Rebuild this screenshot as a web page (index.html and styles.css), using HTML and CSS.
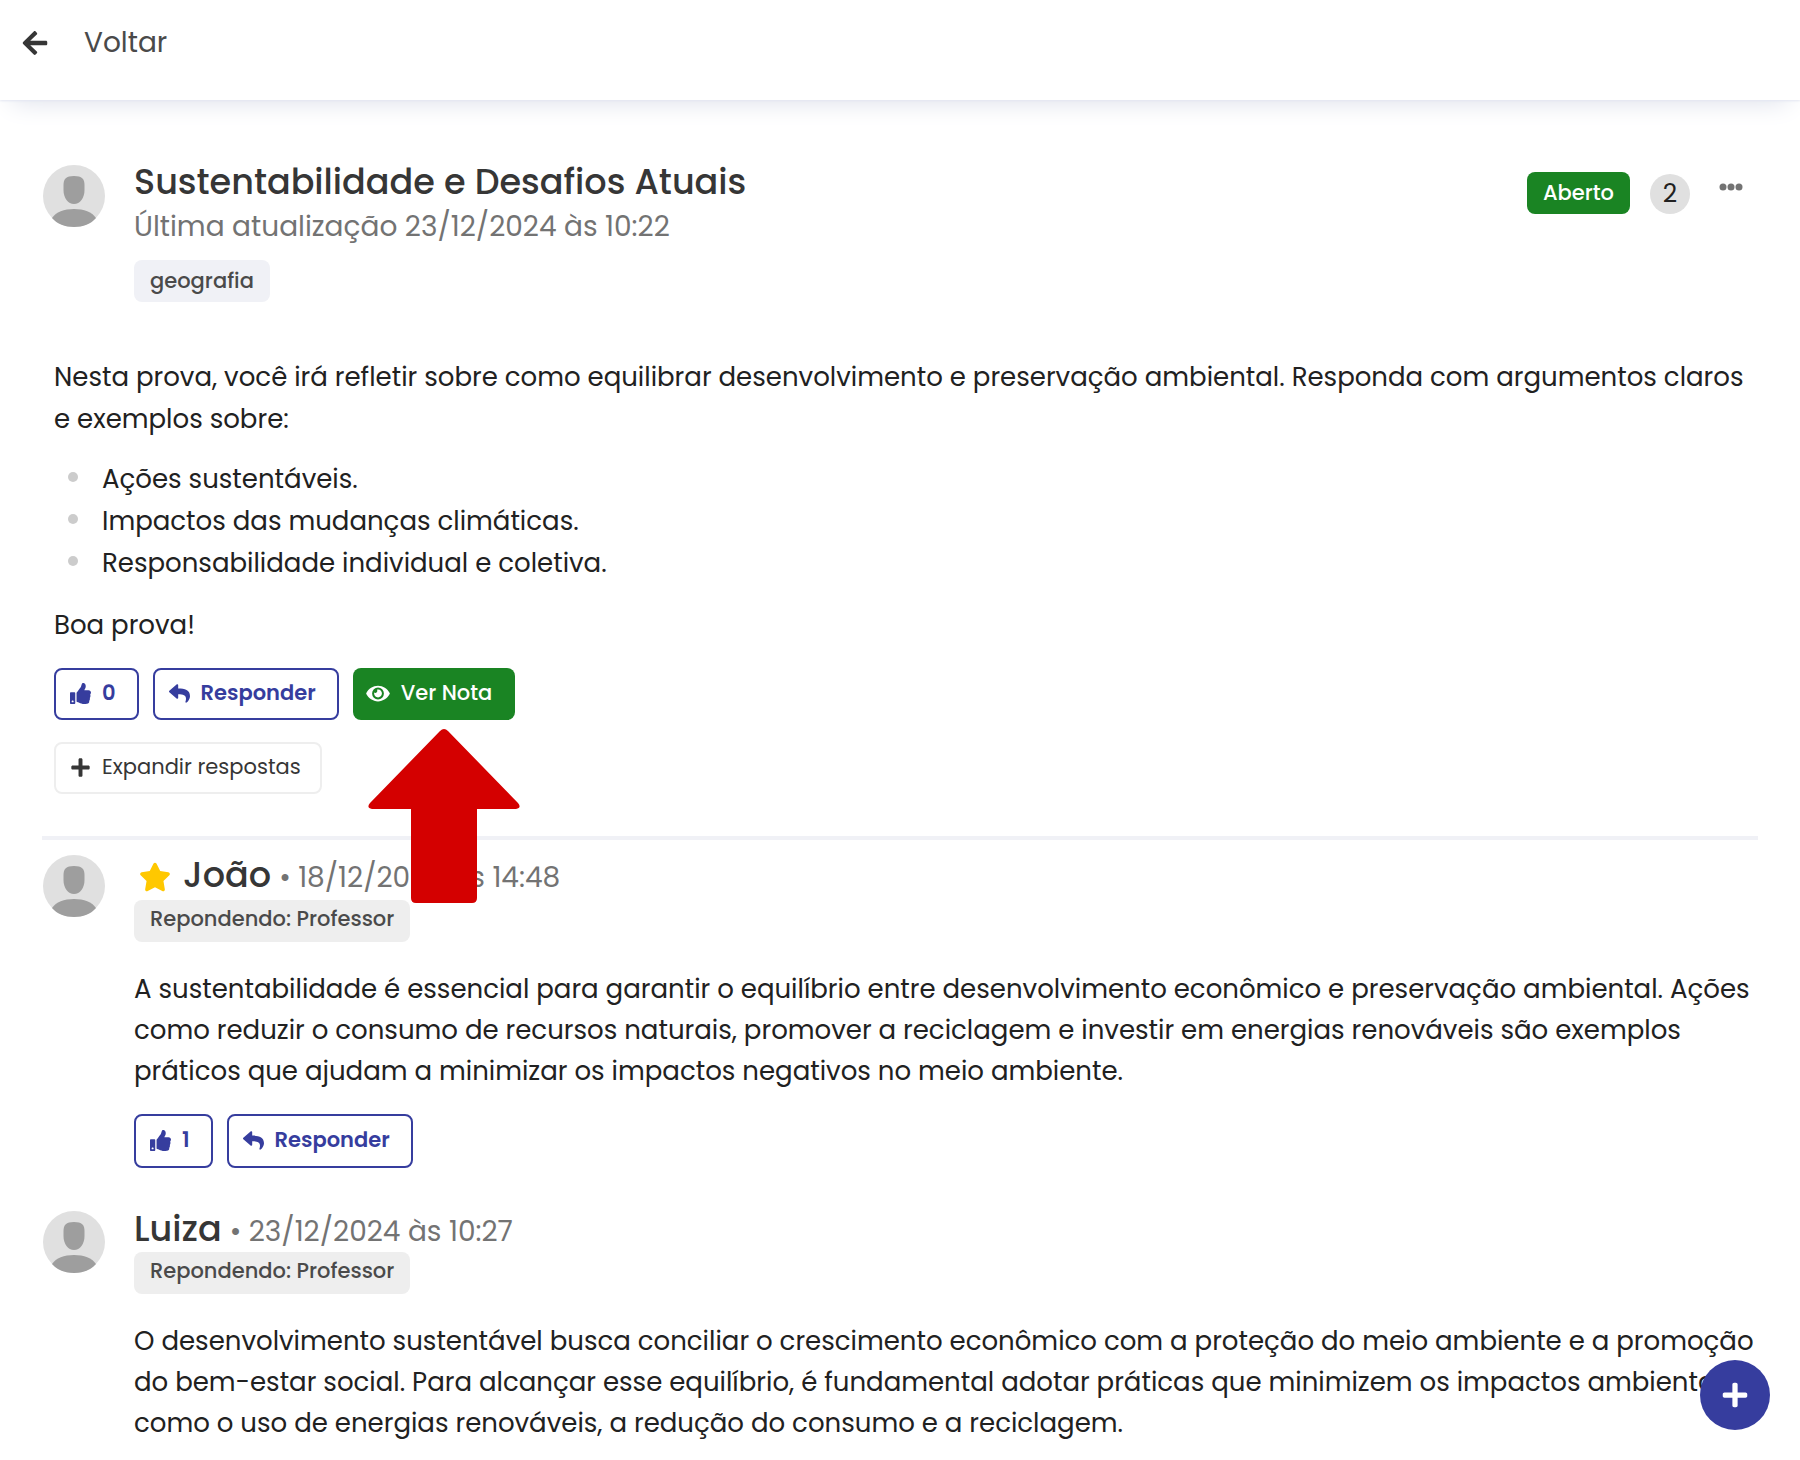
FILE: index.html
```html
<!DOCTYPE html>
<html lang="pt-BR">
<head>
  <meta charset="UTF-8">
  <meta name="viewport" content="width=device-width, initial-scale=1">
  <title>Sustentabilidade e Desafios Atuais</title>
  <link rel="stylesheet" href="styles.css">
</head>
<body>

<!-- Shared icons -->
<svg class="sprite" aria-hidden="true">
  <symbol id="avatar" viewBox="0 0 62 62">
    <circle cx="31" cy="31" r="31" fill="#e0e0e0"/>
    <path d="M31 11c8 0 10.500 3 10.500 9v5c0 8-4.500 14-10.500 14s-10.500-6-10.500-14v-5c0-6 2.500-9 10.500-9z" fill="#9e9e9e"/>
    <path d="M9 53c4-6 12-9 22-9s18 3 22 9c-5 6-13 9-22 9s-17-3-22-9z" fill="#9e9e9e"/>
  </symbol>
  <symbol id="arrow-left" viewBox="0 0 448 512">
    <path d="M257.500 445.100l-22.200 22.200c-9.400 9.400-24.600 9.400-33.900 0L7 273c-9.400-9.400-9.400-24.600 0-33.900L201.400 44.700c9.400-9.400 24.600-9.400 33.900 0l22.200 22.200c9.500 9.500 9.300 25-.4 34.300L136.600 216H424c13.300 0 24 10.700 24 24v32c0 13.300-10.700 24-24 24H136.600l120.500 114.800c9.800 9.300 10 24.800.4 34.300z"/>
  </symbol>
  <symbol id="thumbs-up" viewBox="0 0 512 512">
    <path d="M104 224H24c-13.255 0-24 10.745-24 24v240c0 13.255 10.745 24 24 24h80c13.255 0 24-10.745 24-24V248c0-13.255-10.745-24-24-24zM64 472c-13.255 0-24-10.745-24-24s10.745-24 24-24 24 10.745 24 24-10.745 24-24 24zM384 81.452c0 42.416-25.97 66.208-33.277 94.548h101.723c33.397 0 59.397 27.746 59.553 58.098.084 17.938-7.546 37.249-19.439 49.197l-.11.11c9.836 23.337 8.237 56.037-9.308 79.469 8.681 25.895-.069 57.704-16.382 74.757 4.298 17.598 2.244 32.575-6.148 44.632C440.202 511.587 389.616 512 346.839 512l-2.845-.001c-48.287-.017-87.806-17.598-119.56-31.725-15.957-7.099-36.821-15.887-52.651-16.178-6.54-.12-11.783-5.457-11.783-11.998v-213.77c0-3.2 1.282-6.271 3.558-8.521 39.614-39.144 56.648-80.587 89.117-113.111 14.804-14.832 20.188-37.236 25.393-58.902C282.515 39.293 291.817 0 312 0c24 0 72 8 72 81.452z"/>
  </symbol>
  <symbol id="reply" viewBox="0 0 512 512">
    <path d="M8.309 189.836L184.313 37.851C199.719 24.546 224 35.347 224 56.015v80.053c160.629 1.839 288 34.032 288 186.258 0 61.441-39.581 122.309-83.333 154.132-13.653 9.931-33.111-2.533-28.077-18.631 45.344-145.012-21.507-183.51-176.59-185.742V360c0 20.7-24.3 31.453-39.687 18.164l-176.004-152c-11.071-9.562-11.086-26.753 0-36.328z"/>
  </symbol>
  <symbol id="eye" viewBox="0 0 576 512">
    <path d="M572.52 241.4C518.29 135.59 410.93 64 288 64S57.68 135.64 3.48 241.41a32.35 32.35 0 0 0 0 29.19C57.71 376.41 165.07 448 288 448s230.32-71.64 284.52-177.41a32.35 32.35 0 0 0 0-29.19zM288 400a144 144 0 1 1 144-144 143.93 143.93 0 0 1-144 144zm0-240a95.31 95.31 0 0 0-25.31 3.79 47.85 47.85 0 0 1-66.9 66.9A95.78 95.78 0 1 0 288 160z"/>
  </symbol>
  <symbol id="plus" viewBox="0 0 448 512">
    <path d="M416 208H272V64c0-17.67-14.33-32-32-32h-32c-17.67 0-32 14.33-32 32v144H32c-17.67 0-32 14.33-32 32v32c0 17.67 14.33 32 32 32h144v144c0 17.67 14.33 32 32 32h32c17.67 0 32-14.33 32-32V304h144c17.67 0 32-14.33 32-32v-32c0-17.67-14.33-32-32-32z"/>
  </symbol>
  <symbol id="star" viewBox="0 0 576 512">
    <path d="M259.3 17.8L194 150.2 47.9 171.5c-26.2 3.8-36.7 36.1-17.7 54.6l105.7 103-25 145.5c-4.5 26.3 23.2 46 46.4 33.7L288 439.6l130.7 68.7c23.2 12.2 50.9-7.4 46.4-33.7l-25-145.5 105.7-103c19-18.5 8.5-50.8-17.7-54.6L382 150.2 316.7 17.8c-11.7-23.6-45.6-23.9-57.4 0z"/>
  </symbol>
</svg>

<header class="topbar">
  <a href="#" class="back">
    <svg class="icon-back" aria-hidden="true"><use href="#arrow-left"/></svg>
    Voltar
  </a>
</header>

<main class="container">
  <article class="topic">
    <div class="topic-head">
      <svg class="avatar" aria-hidden="true"><use href="#avatar"/></svg>
      <div class="topic-info">
        <h1>Sustentabilidade e Desafios Atuais</h1>
        <p class="updated">Última atualização 23/12/2024 às 10:22</p>
        <span class="tag tag-subject">geografia</span>
      </div>
      <div class="topic-status">
        <span class="tag tag-open">Aberto</span>
        <span class="count">2</span>
        <button type="button" class="more" aria-label="Mais opções">
          <svg viewBox="0 0 24 8" aria-hidden="true"><circle cx="4" cy="4" r="3.500"/><circle cx="12" cy="4" r="3.500"/><circle cx="20" cy="4" r="3.500"/></svg>
        </button>
      </div>
    </div>

    <div class="topic-body">
      <p>Nesta prova, você irá refletir sobre como equilibrar desenvolvimento e preservação ambiental. Responda com argumentos claros e exemplos sobre:</p>
      <ul>
        <li>Ações sustentáveis.</li>
        <li>Impactos das mudanças climáticas.</li>
        <li>Responsabilidade individual e coletiva.</li>
      </ul>
      <p>Boa prova!</p>

      <div class="actions">
        <button type="button" class="btn btn-outline"><svg aria-hidden="true"><use href="#thumbs-up"/></svg>0</button>
        <button type="button" class="btn btn-outline"><svg aria-hidden="true"><use href="#reply"/></svg>Responder</button>
        <div class="grade">
          <button type="button" class="btn btn-green"><svg class="wide" aria-hidden="true"><use href="#eye"/></svg>Ver Nota</button>
          <svg class="pointer" viewBox="0 0 152 174" aria-hidden="true">
            <path d="M72 2q4-4 8 0l70 72q4 5-2 6h-39v89q0 5-5 5H48q-5 0-5-5V80H4q-6-1-2-6z"/>
          </svg>
        </div>
      </div>
      <button type="button" class="btn btn-light"><svg aria-hidden="true"><use href="#plus"/></svg>Expandir respostas</button>
    </div>
  </article>

  <section class="replies">
    <article class="reply">
      <svg class="avatar" aria-hidden="true"><use href="#avatar"/></svg>
      <div class="reply-main">
        <div class="reply-head featured">
          <svg class="star" aria-hidden="true"><use href="#star"/></svg>
          <h2>João</h2>
          <span class="date">• 18/12/2024 às 14:48</span>
        </div>
        <span class="tag">Repondendo: Professor</span>
        <p class="reply-text">A sustentabilidade é essencial para garantir o equilíbrio entre desenvolvimento econômico e preservação ambiental. Ações como reduzir o consumo de recursos naturais, promover a reciclagem e investir em energias renováveis são exemplos práticos que ajudam a minimizar os impactos negativos no meio ambiente.</p>
        <div class="actions">
          <button type="button" class="btn btn-outline"><svg aria-hidden="true"><use href="#thumbs-up"/></svg>1</button>
          <button type="button" class="btn btn-outline"><svg aria-hidden="true"><use href="#reply"/></svg>Responder</button>
        </div>
      </div>
    </article>

    <article class="reply">
      <svg class="avatar" aria-hidden="true"><use href="#avatar"/></svg>
      <div class="reply-main">
        <div class="reply-head">
          <h2>Luiza</h2>
          <span class="date">• 23/12/2024 às 10:27</span>
        </div>
        <span class="tag">Repondendo: Professor</span>
        <p class="reply-text">O desenvolvimento sustentável busca conciliar o crescimento econômico com a proteção do meio ambiente e a promoção do bem-estar social. Para alcançar esse equilíbrio, é fundamental adotar práticas que minimizem os impactos ambientais, como o uso de energias renováveis, a redução do consumo e a reciclagem.</p>
      </div>
    </article>
  </section>
</main>

<button type="button" class="fab" aria-label="Novo tópico"><svg aria-hidden="true"><use href="#plus"/></svg></button>

</body>
</html>
```
FILE: styles.css
```css
* {
  box-sizing: border-box;
}

body {
  margin: 0;
  font-family: Poppins, Inter, sans-serif;
  font-size: 26px;
  line-height: 41px;
  color: #212121;
  background: #fff;
}

h1, h2, p, ul {
  margin: 0;
}

button {
  font-family: inherit;
  cursor: pointer;
}

svg {
  fill: currentColor;
  flex-shrink: 0;
}

.sprite {
  display: none;
}

/* Top bar */
.topbar {
  height: 100px;
  padding: 22px;
  background: #fff;
  box-shadow: 0 1px 2px #e4e7f2, 0 14px 26px -12px #dcdfea;
}

.back {
  display: inline-flex;
  align-items: center;
  gap: 36px;
  font-size: 28px;
  line-height: 42px;
  color: #4a4a4a;
  text-decoration: none;
}

.icon-back {
  width: 26px;
  height: 28px;
  color: #363636;
}

.container {
  padding: 62px 42px 0;
}

.avatar {
  width: 62px;
  height: 62px;
  margin: 3px 0 0 1px;
}

.tag {
  display: inline-block;
  height: 42px;
  padding: 0 16px;
  border-radius: 8px;
  font-size: 21px;
  font-weight: 500;
  line-height: 38px;
  color: #4a4a4a;
  background: #eee;
}

.tag-subject,
.tag-open {
  line-height: 42px;
}

.tag-subject {
  margin-top: 8px;
  background: #f0f1f6;
}

.tag-open {
  color: #fff;
  background: #1a8423;
}

/* Topic */
.topic {
  padding-bottom: 42px;
  border-bottom: 4px solid #f0f1f6;
}

.topic-head {
  display: flex;
  gap: 29px;
}

.topic-info {
  flex: 1;
}

h1, h2 {
  font-size: 35px;
  font-weight: 500;
  line-height: 40px;
  color: #363636;
}

.updated {
  font-size: 28px;
  line-height: 50px;
  color: #737373;
}

.topic-status {
  display: flex;
  align-items: flex-end;
  height: 52px;
  gap: 20px;
  padding-right: 14px;
}

.count {
  width: 40px;
  height: 40px;
  border-radius: 50%;
  font-size: 25px;
  line-height: 40px;
  text-align: center;
  background: #e0e0e0;
}

.more {
  align-self: center;
  width: 34px;
  padding: 0 1px 2px 9px;
  border: none;
  color: #737373;
  background: none;
}

.more svg {
  display: block;
  width: 24px;
  height: 8px;
}

.topic-body {
  padding: 54px 12px 0;
}

.topic-body p,
.topic-body li {
  line-height: 42px;
}

.topic-body ul {
  padding: 0;
  margin: 18px 0 20px;
  list-style: none;
}

.topic-body li {
  display: flex;
  gap: 24px;
  padding-left: 14px;
}

.topic-body li::before {
  content: "";
  width: 10px;
  height: 10px;
  margin-top: 14px;
  border-radius: 50%;
  background: #ccc;
}

/* Buttons */
.actions {
  display: flex;
  gap: 14px;
  margin: 22px 0;
}

.btn {
  display: flex;
  align-items: center;
  gap: 11px;
  height: 52px;
  padding: 0 21px 3px 14px;
  border: 2px solid transparent;
  border-radius: 8px;
  font-size: 21px;
  font-weight: 500;
  background: #fff;
}

.btn svg {
  width: 21px;
  height: 21px;
  margin-top: 2px;
}

.btn .wide {
  width: 24px;
}

.btn-outline {
  font-weight: 600;
  color: #363d9e;
  border-color: #363d9e;
}

.btn-green {
  padding-left: 11px;
  color: #fff;
  background: #1a8423;
}

.btn-light {
  padding-right: 19px;
  font-weight: 400;
  color: #363636;
  border-color: #eee;
}

.grade {
  position: relative;
}

.pointer {
  position: absolute;
  top: 61px;
  left: 15px;
  width: 152px;
  height: 174px;
  fill: #d40000;
}

/* Replies */
.reply {
  display: flex;
  gap: 29px;
  padding-top: 12px;
  margin-bottom: 28px;
}

.reply-main {
  flex: 1;
}

.reply-head {
  display: flex;
  align-items: baseline;
  gap: 8px;
  height: 44px;
  line-height: 42px;
}

.reply-head h2 {
  line-height: 42px;
}

.featured {
  height: 48px;
  padding-top: 2px;
}

.date {
  font-size: 28px;
  line-height: 42px;
  color: #737373;
}

.star {
  align-self: center;
  width: 32px;
  height: 30px;
  margin: 0 4px 0 5px;
  fill: #ffc800;
}

.reply-main .tag {
  display: block;
  width: fit-content;
}

.reply-text {
  margin-top: 27px;
}

.reply .actions {
  margin-bottom: 0;
}

.reply .btn {
  height: 54px;
}

/* Floating button */
.fab {
  position: fixed;
  right: 30px;
  bottom: 30px;
  display: flex;
  align-items: center;
  justify-content: center;
  width: 70px;
  height: 70px;
  border: none;
  border-radius: 50%;
  color: #fff;
  background: #363d9e;
}

.fab svg {
  width: 26px;
  height: 28px;
}
```
